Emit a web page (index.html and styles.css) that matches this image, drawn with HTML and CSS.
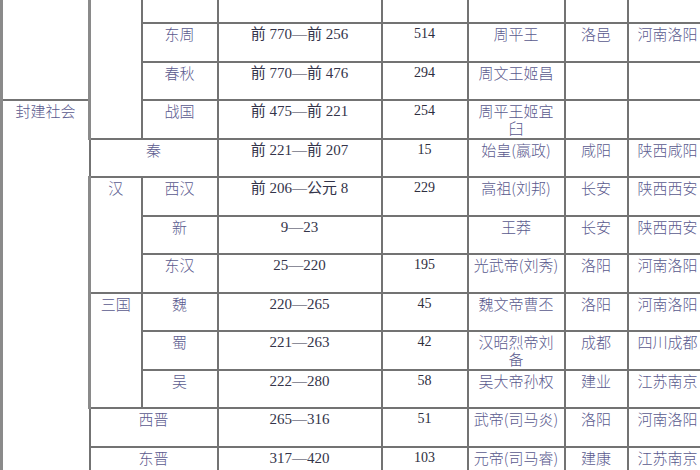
FILE: index.html
```html
<!DOCTYPE html>
<html lang="zh-CN">
<head>
<meta charset="utf-8">
<title>中国历代王朝表</title>
<link rel="stylesheet" href="styles.css">
</head>
<body>
<table class="dyn">
  <colgroup>
    <col class="c-soc"><col class="c-grp"><col class="c-name"><col class="c-year"><col class="c-dur"><col class="c-ruler"><col class="c-cap"><col class="c-mod">
  </colgroup>
  <tbody>
    <tr>
      <td class="cn" rowspan="5">奴隶社会</td>
      <td class="cn" colspan="2">夏</td>
      <td class="yr">约前 2070—前 1600</td>
      <td class="num">470</td>
      <td class="cn">禹</td>
      <td class="cn">阳城</td>
      <td class="cn">河南登封</td>
    </tr>
    <tr>
      <td class="cn" colspan="2">商</td>
      <td class="yr">前 1600—前 1046</td>
      <td class="num">554</td>
      <td class="cn">汤</td>
      <td class="cn">亳</td>
      <td class="cn">河南商丘</td>
    </tr>
    <tr class="tall">
      <td class="cn" rowspan="4">周</td>
      <td class="cn">西周</td>
      <td class="yr">前 1046—前 771</td>
      <td class="num">275</td>
      <td class="cn">周武王姬发</td>
      <td class="cn">镐京</td>
      <td class="cn">陕西西安</td>
    </tr>
    <tr>
      <td class="cn">东周</td>
      <td class="yr">前 770—前 256</td>
      <td class="num">514</td>
      <td class="cn">周平王</td>
      <td class="cn">洛邑</td>
      <td class="cn">河南洛阳</td>
    </tr>
    <tr>
      <td class="cn">春秋</td>
      <td class="yr">前 770—前 476</td>
      <td class="num">294</td>
      <td class="cn">周文王姬昌</td>
      <td class="cn"></td>
      <td class="cn"></td>
    </tr>
    <tr>
      <td class="cn" rowspan="10">封建社会</td>
      <td class="cn">战国</td>
      <td class="yr">前 475—前 221</td>
      <td class="num">254</td>
      <td class="cn"><span class="ln">周平王姬宜</span><span class="ln">臼</span></td>
      <td class="cn"></td>
      <td class="cn"></td>
    </tr>
    <tr>
      <td class="cn" colspan="2">秦</td>
      <td class="yr yr-qin">前 221—前 207</td>
      <td class="num">15</td>
      <td class="cn">始皇(嬴政)</td>
      <td class="cn">咸阳</td>
      <td class="cn">陕西咸阳</td>
    </tr>
    <tr>
      <td class="cn" rowspan="3">汉</td>
      <td class="cn">西汉</td>
      <td class="yr">前 206—公元 8</td>
      <td class="num">229</td>
      <td class="cn">高祖(刘邦)</td>
      <td class="cn">长安</td>
      <td class="cn">陕西西安</td>
    </tr>
    <tr>
      <td class="cn">新</td>
      <td class="yr yr-xin">9—23</td>
      <td class="num"></td>
      <td class="cn">王莽</td>
      <td class="cn">长安</td>
      <td class="cn">陕西西安</td>
    </tr>
    <tr>
      <td class="cn">东汉</td>
      <td class="yr yr-dh">25—220</td>
      <td class="num">195</td>
      <td class="cn">光武帝(刘秀)</td>
      <td class="cn">洛阳</td>
      <td class="cn">河南洛阳</td>
    </tr>
    <tr>
      <td class="cn" rowspan="3">三国</td>
      <td class="cn">魏</td>
      <td class="yr">220—265</td>
      <td class="num">45</td>
      <td class="cn">魏文帝曹丕</td>
      <td class="cn">洛阳</td>
      <td class="cn">河南洛阳</td>
    </tr>
    <tr>
      <td class="cn">蜀</td>
      <td class="yr">221—263</td>
      <td class="num">42</td>
      <td class="cn"><span class="ln">汉昭烈帝刘</span><span class="ln">备</span></td>
      <td class="cn">成都</td>
      <td class="cn">四川成都</td>
    </tr>
    <tr>
      <td class="cn">吴</td>
      <td class="yr">222—280</td>
      <td class="num">58</td>
      <td class="cn">吴大帝孙权</td>
      <td class="cn">建业</td>
      <td class="cn">江苏南京</td>
    </tr>
    <tr>
      <td class="cn" colspan="2">西晋</td>
      <td class="yr">265—316</td>
      <td class="num">51</td>
      <td class="cn">武帝(司马炎)</td>
      <td class="cn">洛阳</td>
      <td class="cn">河南洛阳</td>
    </tr>
    <tr>
      <td class="cn" colspan="2">东晋</td>
      <td class="yr">317—420</td>
      <td class="num">103</td>
      <td class="cn">元帝(司马睿)</td>
      <td class="cn">建康</td>
      <td class="cn">江苏南京</td>
    </tr>
  </tbody>
</table>
</body>
</html>
```

FILE: styles.css
```css
html, body {
  margin: 0;
  padding: 0;
  background: #ffffff;
}

body {
  width: 700px;
  height: 470px;
  overflow: hidden;
}

.dyn {
  border-collapse: collapse;
  table-layout: fixed;
  width: 706px;
  margin-top: -99.5px;
  font-family: "Noto Sans CJK SC", "Liberation Serif", sans-serif;
}

.c-soc { width: 88px; }
.c-grp { width: 52px; }
.c-name { width: 76px; }
.c-year { width: 164px; }
.c-dur { width: 86px; }
.c-ruler { width: 97px; }
.c-cap { width: 63px; }
.c-mod { width: 80px; }

.dyn tr {
  height: 38.5px;
}

.dyn tr.tall {
  height: 44.5px;
}

.dyn td {
  border: 2px solid #737373;
  padding: 1px 2px 0;
  vertical-align: top;
  text-align: center;
  white-space: nowrap;
  line-height: 18px;
  overflow: hidden;
}

.dyn tr td:first-child[rowspan] {
  border-left: 3px solid #8a8a8a;
}

.cn {
  font-size: 15px;
  font-weight: 300;
  color: #5a5a8e;
}

.ln {
  display: block;
  height: 17px;
  line-height: 17px;
}

.yr {
  font-family: "Liberation Serif", "Noto Sans CJK SC", serif;
  font-size: 15px;
  color: #34344a;
}

.yr-qin {
  padding-left: 32px;
}

.yr-xin {
  padding-left: 26px;
}

.yr-dh {
  padding-left: 10px;
}

.num {
  font-family: "Liberation Serif", serif;
  font-size: 14px;
  color: #2e2e3e;
}
```
